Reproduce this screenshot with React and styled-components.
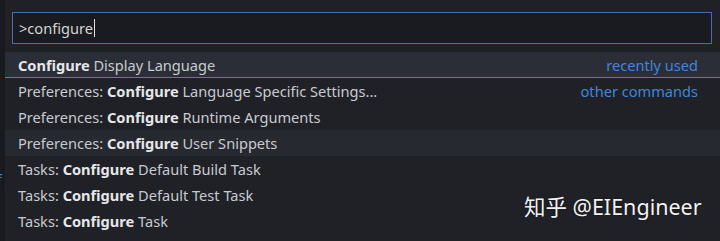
import React from "react";
import styled, { createGlobalStyle } from "styled-components";

const Global = createGlobalStyle`
  html, body { margin: 0; padding: 0; background: #181a1f; }
  body { width: 720px; height: 241px; overflow: hidden; font-family: "Noto Sans", "Open Sans", sans-serif; }
`;

const Page = styled.div`
  display: flex;
  width: 720px;
  height: 241px;
  background: #181a1f;
  position: relative;
  overflow: hidden;
`;

const Gutter = styled.div`
  width: 5px;
  flex: none;
  position: relative;
  color: #3c7fd6;
  font-size: 14px;
`;

const GutterGlyph = styled.span`
  position: absolute;
  left: -3px;
  top: 170px;
  line-height: 20px;
`;

const Widget = styled.div`
  flex: 1;
  background: #1f2127;
  display: flex;
  flex-direction: column;
  padding-top: 12px;
`;

const InputBox = styled.div`
  margin: 0 8px 8px 7px;
  height: 32px;
  box-sizing: border-box;
  border: 1px solid #4a6bb0;
  background: #1a1b20;
  display: flex;
  align-items: center;
  padding-left: 6px;
  color: #d4d4d4;
  font-size: 14.6px;
`;

const Caret = styled.span`
  display: inline-block;
  width: 1px;
  height: 18px;
  background: #e0e0e0;
  margin-left: 1px;
  vertical-align: middle;
`;

const List = styled.div`
  display: flex;
  flex-direction: column;
`;

const Row = styled.div`
  height: 26px;
  box-sizing: border-box;
  display: flex;
  align-items: center;
  justify-content: space-between;
  padding: 0 22px 0 13px;
  font-size: 14.6px;
  color: #c8cacf;
  background: ${(p) => (p.$active ? "#2b2e36" : p.$hover ? "#262930" : "transparent")};
  border-bottom: ${(p) => (p.$divider ? "1px solid #4c79d0" : "none")};
  white-space: nowrap;
`;

const Label = styled.span``;

const Match = styled.b`
  font-weight: 700;
  color: #e6e7ea;
`;

const Tag = styled.span`
  color: #3f86dc;
  font-size: 14.6px;
`;

const Watermark = styled.div`
  position: absolute;
  left: 524px;
  top: 192px;
  font-family: "Noto Sans", "Noto Sans CJK SC", sans-serif;
  font-size: 21.5px;
  color: #f2f2f2;
  text-shadow: 0 0 2px rgba(0,0,0,0.6);
  line-height: 30px;
  white-space: nowrap;
`;

const rows = [
  { pre: "", rest: "Display Language", tag: "recently used", active: true, divider: true },
  { pre: "Preferences: ", rest: "Language Specific Settings...", tag: "other commands" },
  { pre: "Preferences: ", rest: "Runtime Arguments" },
  { pre: "Preferences: ", rest: "User Snippets", hover: true },
  { pre: "Tasks: ", rest: "Default Build Task" },
  { pre: "Tasks: ", rest: "Default Test Task" },
  { pre: "Tasks: ", rest: "Task" },
];

export default function App() {
  return (
    <>
      <Global />
      <Page>
        <Gutter>
          <GutterGlyph>f</GutterGlyph>
        </Gutter>
        <Widget>
          <InputBox>
            &gt;configure<Caret />
          </InputBox>
          <List>
            {rows.map((r, i) => (
              <Row key={i} $active={r.active} $hover={r.hover} $divider={r.divider}>
                <Label>
                  {r.pre}
                  <Match>Configure</Match> {r.rest}
                </Label>
                {r.tag && <Tag>{r.tag}</Tag>}
              </Row>
            ))}
          </List>
        </Widget>
        <Watermark>知乎 @EIEngineer</Watermark>
      </Page>
    </>
  );
}
